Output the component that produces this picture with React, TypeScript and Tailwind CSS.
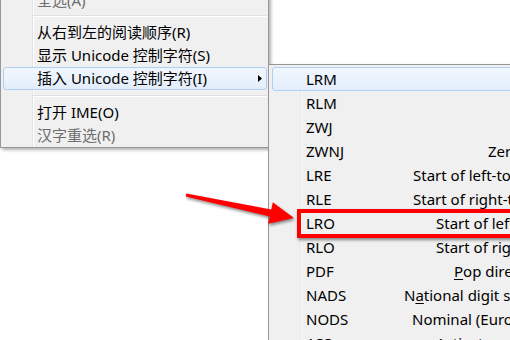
const mainItems = [
  { label: "全选(A)", disabled: true },
  { sep: true, h: "h-[9px]", pt: "pt-[3px]" },
  { label: "从右到左的阅读顺序(R)" },
  { label: "显示 Unicode 控制字符(S)" },
  { label: "插入 Unicode 控制字符(I)", active: true, sub: true },
  { sep: true, h: "h-[11px]", pt: "pt-[5px]" },
  { label: "打开 IME(O)" },
  { label: "汉字重选(R)", disabled: true },
];

const subItems = [
  { code: "LRM", desc: "Left-to-right mark", ml: "ml-[150px]" },
  { code: "RLM", desc: "Right-to-left mark", ml: "ml-[150px]" },
  { code: "ZWJ", desc: "Zero width joiner", ml: "ml-[150px]" },
  { code: "ZWNJ", desc: "Zero width non-joiner", ml: "ml-[122px]" },
  { code: "LRE", desc: "Start of left-to-right embedding", ml: "ml-[47px]" },
  { code: "RLE", desc: "Start of right-to-left embedding", ml: "ml-[47px]" },
  { code: "LRO", desc: "Start of left-to-right override", ml: "ml-[70px]" },
  { code: "RLO", desc: "Start of right-to-left override", ml: "ml-[70px]" },
  { code: "PDF", desc: "Pop directional formatting", ml: "ml-[88px]", u: 0 },
  { code: "NADS", desc: "National digit shapes substitution", ml: "ml-[38px]", u: 1 },
  { code: "NODS", desc: "Nominal (European) digit shapes", ml: "ml-[46px]" },
  { code: "ASS", desc: "Activate symmetric swapping", ml: "ml-[70px]" },
];

const Desc = ({ text, u }: { text: string; u?: number }) => {
  if (u === undefined) return <>{text}</>;
  return (
    <>
      {text.slice(0, u)}
      <span className="underline underline-offset-[2px]">{text[u]}</span>
      {text.slice(u + 1)}
    </>
  );
};

const Highlight = "border border-[#aecff7] rounded-[3px] bg-gradient-to-b from-[#f2f7fe] to-[#e3edfb]";

export default function App() {
  return (
    <div className="relative w-[510px] h-[340px] overflow-hidden bg-white font-['Noto_Sans','Noto_Sans_CJK_SC',sans-serif] text-[15px] leading-none text-black">
      {/* main context menu */}
      <div className="relative -mt-[13px] w-[269px] border border-[#979797] bg-[#f0f0f0] pt-[1px] pl-[2px] pr-[1px] shadow-[2px_2px_3px_rgba(0,0,0,0.3)]">
        <div className="absolute left-[31px] top-0 bottom-0 w-[2px] border-l border-[#e2e3e3] bg-white" />
        {mainItems.map((it, i) =>
          it.sep ? (
            <div key={i} className={`relative ${it.h} ${it.pt} pl-[30px]`}>
              <div className="h-[1px] bg-[#e0e0e0]" />
              <div className="h-[1px] bg-white" />
            </div>
          ) : (
            <div
              key={i}
              className={`relative flex h-[23px] items-center justify-between pl-[33px] pr-[4px] ${
                it.active ? Highlight : "border border-transparent"
              } ${it.disabled ? "text-[#6d6d6d]" : ""}`}
            >
              <span className="whitespace-nowrap">{it.label}</span>
              {it.sub && (
                <svg width="4" height="7" viewBox="0 0 4 7">
                  <path d="M0 0 L4 3.5 L0 7 Z" fill="#000" />
                </svg>
              )}
            </div>
          )
        )}
      </div>

      {/* submenu */}
      <div className="absolute left-[268px] top-[64px] w-[400px] border border-[#979797] bg-[#f0f0f0] pt-[2px] pl-[3px] shadow-[2px_2px_3px_rgba(0,0,0,0.3)]">
        <div className="absolute left-[31px] top-0 bottom-0 w-[2px] border-l border-[#e8e8e8] bg-[#f8f8f8]" />
        {subItems.map((it, i) => (
          <div
            key={it.code}
            className={`relative flex h-[24px] items-center whitespace-nowrap pl-[33px] ${
              i === 0 ? Highlight : "border border-transparent"
            }`}
          >
            <span className="w-[60px]">{it.code}</span>
            <span className={it.ml}>
              <Desc text={it.desc} u={it.u} />
            </span>
          </div>
        ))}
      </div>

      {/* red annotation box */}
      <div className="absolute left-[297px] top-[209px] w-[240px] h-[29px] border-[4px] border-[#ff0000] shadow-[1px_2px_3px_rgba(0,0,0,0.45)]" />

      {/* red arrow */}
      <svg
        className="absolute left-0 top-0 drop-shadow-[1px_2px_1.5px_rgba(0,0,0,0.45)]"
        width="510"
        height="340"
        viewBox="0 0 510 340"
      >
        <polygon
          points="186.3,193.5 271.3,209.4 272.8,202.2 294,218 268.2,223.8 269.7,216.6 185.7,196.5"
          fill="#ff0000"
        />
      </svg>
    </div>
  );
}
